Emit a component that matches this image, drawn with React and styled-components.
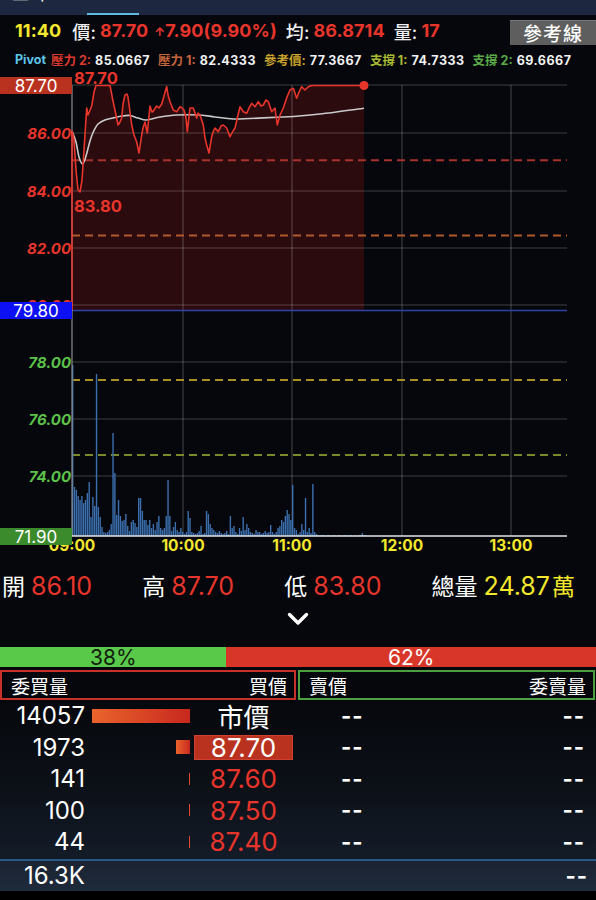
import React from 'react';
import styled, { createGlobalStyle } from 'styled-components';

const RED = '#e8352b';
const YELLOW = '#f4e72c';

const GlobalStyle = createGlobalStyle`
  html, body { margin: 0; padding: 0; background: #05070c; }
  body { font-family: Inter, "Noto Sans CJK TC", sans-serif; }
`;

// volume per minute, 09:00 -> 11:40
const VOL = [
  171, 49, 46, 40, 36, 40, 33, 36, 43, 54,
  19, 39, 30, 162, 29, 19, 9, 4, 3, 4,
  6, 12, 103, 63, 21, 36, 20, 15, 16, 22,
  10, 5, 14, 16, 13, 9, 38, 38, 25, 16,
  16, 11, 16, 8, 12, 6, 14, 20, 8, 6,
  8, 20, 56, 20, 5, 9, 14, 6, 4, 8,
  4, 2, 4, 25, 18, 4, 3, 2, 3, 5,
  10, 2, 3, 25, 22, 12, 8, 6, 4, 3,
  5, 3, 2, 3, 5, 2, 20, 8, 10, 4,
  2, 8, 5, 19, 6, 12, 8, 4, 3, 2,
  6, 4, 4, 2, 3, 5, 3, 4, 11, 4,
  2, 4, 8, 10, 16, 14, 20, 26, 22, 16,
  51, 8, 6, 2, 4, 12, 6, 38, 4, 8,
  3, 52, 4, 2, 1, 1, 1, 1, 0, 1,
  1, 0, 1, 1, 0, 1, 1, 0, 1, 1,
  0, 1, 1, 0, 1, 0, 1, 1, 3, 1, 1,
];

const PRICE = [
  [72, 131], [74, 140], [76, 170], [78, 190], [80, 192], [82, 180], [84, 150], [86.7, 108],
  [88, 115], [91.7, 106], [94, 92], [96, 85.5], [110, 85.5], [113, 101], [116, 115], [118, 125],
  [120, 122], [121.7, 118], [123, 104], [125, 95], [127, 94], [128, 97], [130, 112], [131.7, 125],
  [134, 135], [136.7, 142], [139, 153], [141.7, 135], [143, 128], [145, 122], [147.3, 133],
  [150, 106], [152, 112], [153.3, 111], [156.7, 106], [159, 108], [161.7, 104], [164, 96],
  [166.7, 86.5], [168, 95], [170, 101.7], [173.3, 110], [176.7, 111.7], [180, 106.7], [182, 108],
  [184, 110], [186, 118], [187.3, 131.7], [190, 108], [193.3, 108], [196.7, 118], [198, 113],
  [200, 115], [203.3, 125], [205, 138], [206.7, 145], [209, 153], [211.7, 136.7], [213, 132],
  [215, 128], [218.3, 131.7], [221, 126], [223.3, 125], [226.7, 128], [230, 136.7], [233, 131],
  [235, 128], [238, 115], [240, 106.7], [243.3, 111.7], [246.7, 113.3], [249, 108], [251.7, 103.3],
  [255, 106.7], [258.3, 101.7], [261, 106], [263.3, 105], [266, 100], [268.3, 101.7], [271.7, 111.7],
  [275, 108], [277.3, 125], [280, 115], [283.3, 108], [287, 97], [290, 90], [293.3, 88.3],
  [296.7, 98.3], [299, 92], [301.7, 86.7], [305, 90], [308, 87], [311.7, 85.5], [364, 85.5],
];

const AVG = [
  [72, 131], [76, 142], [79, 157], [82.7, 164], [86, 156], [90, 141], [93.3, 132], [98, 124],
  [105, 120], [113, 118], [122, 116], [130, 115.5], [138, 118], [146.7, 120], [160, 117],
  [176.7, 115], [200, 115], [215, 117], [233.3, 119], [250, 118.5], [276.7, 117.3],
  [293.3, 116.5], [320, 114], [364, 108.3],
];

const smooth = (pts) => {
  let d = `M${pts[0][0]},${pts[0][1]}`;
  for (let i = 0; i < pts.length - 1; i++) {
    const p0 = pts[i - 1] || pts[i];
    const p1 = pts[i];
    const p2 = pts[i + 1];
    const p3 = pts[i + 2] || p2;
    const c1x = p1[0] + (p2[0] - p0[0]) / 6;
    const c1y = p1[1] + (p2[1] - p0[1]) / 6;
    const c2x = p2[0] - (p3[0] - p1[0]) / 6;
    const c2y = p2[1] - (p3[1] - p1[1]) / 6;
    d += ` C${c1x},${c1y} ${c2x},${c2y} ${p2[0]},${p2[1]}`;
  }
  return d;
};

const line = (pts) => 'M' + pts.map((p) => p.join(',')).join(' L');

const GRID_Y = [133, 191, 248, 305, 362, 419, 476];
const GRID_X = [183, 292, 402, 511];
const TIMES = [['09:00', 72], ['10:00', 183], ['11:00', 292], ['12:00', 402], ['13:00', 511]];
const Y_LABELS = [
  ['86.00', 133, RED], ['84.00', 191, RED], ['82.00', 248, RED], ['80.00', 305, RED],
  ['78.00', 362, '#5cc24a'], ['76.00', 419, '#5cc24a'], ['74.00', 476, '#5cc24a'],
];
const DASHES = [[160.2, '#a8322c'], [235.5, '#b05a2c'], [380, '#a89024'], [455, '#7d8a2c']];
const BOXES = [['87.70', 77, '#b9321f'], ['79.80', 302, '#0c10f2'], ['71.90', 528, '#3b8a2c']];

function Chart() {
  const fill = line(PRICE) + ' L364,310.5 L72,310.5 Z';
  return (
    <ChartSvg width="596" height="488" viewBox="0 68 596 488">
      <path d={fill} fill="#2c0b0e" />
      {GRID_Y.map((y) => (
        <line key={y} x1="72" x2="567" y1={y} y2={y} stroke="rgba(255,255,255,0.22)" strokeWidth="1" />
      ))}
      <line x1="72" x2="567" y1="85" y2="85" stroke="rgba(255,255,255,0.22)" />
      {GRID_X.map((x) => (
        <line key={x} x1={x} x2={x} y1="85" y2="536" stroke="rgba(255,255,255,0.25)" strokeWidth="1" />
      ))}
      {DASHES.map(([y, c]) => (
        <line key={y} x1="72" x2="567" y1={y} y2={y} stroke={c} strokeWidth="2" strokeDasharray="8 5" />
      ))}
      <line x1="72" x2="567" y1="310.5" y2="310.5" stroke="#2e44a8" strokeWidth="1.6" />
      {VOL.map((v, m) => (
        <rect key={m} x={72 + m * 1.8333} y={536 - v} width="1.4" height={v} fill="#3b6fae" />
      ))}
      <line x1="72" x2="72" y1="85" y2="536" stroke="#8c8c8c" strokeWidth="1.2" />
      <line x1="72" x2="72" y1="131" y2="310" stroke={RED} strokeWidth="1.5" />
      <line x1="72" x2="567" y1="536" y2="536" stroke="#e6e6e6" strokeWidth="1.5" />
      <path d={smooth(AVG)} fill="none" stroke="#c9c9c9" strokeWidth="1.6" />
      <path d={line(PRICE)} fill="none" stroke={RED} strokeWidth="1.6" strokeLinejoin="round" />
      <circle cx="364" cy="85.5" r="4.5" fill={RED} />

      <AxisText x="74" y="84" fill={RED} $size={16.5}>87.70</AxisText>
      <AxisText x="74" y="212" fill={RED} $size={16.5}>83.80</AxisText>
      {Y_LABELS.map(([t, y, c]) => (
        <AxisText key={t} x="71" y={y + 5.5} fill={c} textAnchor="end" $italic>{t}</AxisText>
      ))}
      {TIMES.map(([t, x]) => (
        <AxisText key={t} x={x} y="551" fill={YELLOW} textAnchor="middle">{t}</AxisText>
      ))}
      {BOXES.map(([t, y, c]) => (
        <g key={t}>
          <rect x="0" y={y} width="72" height="17" fill={c} />
          <BoxText x="36" y={y + 14.5} textAnchor="middle">{t}</BoxText>
        </g>
      ))}
    </ChartSvg>
  );
}

const STATS = [
  { label: '開', value: '86.10' },
  { label: '高', value: '87.70' },
  { label: '低', value: '83.80' },
  { label: '總量', value: '24.87', unit: '萬', color: YELLOW },
];

const BIDS = [
  { vol: 14057, price: '市價', market: true },
  { vol: 1973, price: '87.70', hi: true },
  { vol: 141, price: '87.60' },
  { vol: 100, price: '87.50' },
  { vol: 44, price: '87.40' },
];

const PIVOTS = [
  ['壓力 2:', '85.0667', '#dc3a2e'],
  ['壓力 1:', '82.4333', '#c8663c'],
  ['參考價:', '77.3667', '#c9a22c'],
  ['支撐 1:', '74.7333', '#a9b932'],
  ['支撐 2:', '69.6667', '#5aab48'],
];

export default function App() {
  return (
    <Page>
      <GlobalStyle />
      <TabBar>
        <Tab $w={87}><TabLabel>三 丨</TabLabel></Tab>
        <Tab $w={52} $active />
      </TabBar>

      <QuoteRow>
        <Time>11:40</Time>
        <Label>價:</Label>
        <Num $c={RED}>87.70</Num>
        <Arrow>↑</Arrow>
        <Num $c={RED}>7.90(9.90%)</Num>
        <Label>均:</Label>
        <Num $c={RED}>86.8714</Num>
        <Label>量:</Label>
        <Num $c={RED}>17</Num>
        <RefButton>參考線</RefButton>
      </QuoteRow>

      <PivotRow>
        <PivotTag>Pivot</PivotTag>
        {PIVOTS.map(([l, v, c]) => (
          <PivotItem key={l}>
            <PivotLabel $c={c}>{l}</PivotLabel>
            <PivotValue>{v}</PivotValue>
          </PivotItem>
        ))}
      </PivotRow>

      <Chart />

      <StatsRow>
        {STATS.map((s) => (
          <Stat key={s.label}>
            <StatLabel>{s.label}</StatLabel>
            <StatValue $c={s.color || RED}>{s.value}</StatValue>
            {s.unit && <StatUnit>{s.unit}</StatUnit>}
          </Stat>
        ))}
      </StatsRow>

      <ChevronRow>
        <svg width="22" height="14" viewBox="0 0 22 14">
          <polyline points="2.5,2.5 11,11 19.5,2.5" fill="none" stroke="#fff" strokeWidth="3.4" strokeLinecap="round" strokeLinejoin="round" />
        </svg>
      </ChevronRow>

      <RatioBar>
        <RatioPart $w={38} $bg="#59c94a" $c="#14200f">38%</RatioPart>
        <RatioPart $w={62} $bg="#d9362a" $c="#fff">62%</RatioPart>
      </RatioBar>

      <HeadRow>
        <HeadBox $border="#c9302a" $w={296}>
          <span>委買量</span>
          <span>買價</span>
        </HeadBox>
        <HeadBox $border="#4c9f3e" $w={297}>
          <span>賣價</span>
          <span>委賣量</span>
        </HeadBox>
      </HeadRow>

      <Book>
        {BIDS.map((b) => (
          <BookRow key={b.price}>
            <Vol>{b.vol}</Vol>
            <BarCell>
              <Bar $thin={b.vol < 1000} style={{ width: Math.max(1.5, (98 * b.vol) / 14057) }} />
            </BarCell>
            <Price $market={b.market} $hi={b.hi}>{b.price}</Price>
            <AskSide>
              <Dash>--</Dash>
              <Dash $right>--</Dash>
            </AskSide>
          </BookRow>
        ))}
        <TotalRow>
          <Vol>16.3K</Vol>
          <Dash $right>--</Dash>
        </TotalRow>
      </Book>
      <Footer />
    </Page>
  );
}

const Page = styled.div`
  width: 596px;
  height: 900px;
  overflow: hidden;
  background: #05070c;
  color: #fff;
  display: flex;
  flex-direction: column;
`;

const TabBar = styled.div`
  height: 15px;
  flex: none;
  background: #1d2840;
  display: flex;
  overflow: hidden;
`;

const Tab = styled.div`
  width: ${(p) => p.$w}px;
  height: 15px;
  box-sizing: border-box;
  border-bottom: 2px solid ${(p) => (p.$active ? '#5fb9e3' : 'transparent')};
  overflow: hidden;
`;

const TabLabel = styled.div`
  margin: -15px 0 0 12px;
  font-size: 17px;
  line-height: 18px;
  color: #fff;
  white-space: nowrap;
`;

const QuoteRow = styled.div`
  height: 31px;
  flex: none;
  display: flex;
  align-items: center;
  padding-left: 15px;
  font-size: 18px;
  font-weight: 700;
  letter-spacing: 0.1px;
  white-space: nowrap;
`;

const Time = styled.span`
  color: ${YELLOW};
  margin-right: 11px;
`;

const Label = styled.span`
  color: #eee;
  font-weight: 500;
  margin-right: 4px;
`;

const Num = styled.span`
  color: ${(p) => p.$c};
  margin-right: 9px;
`;

const Arrow = styled.span`
  color: ${RED};
  font-size: 12px;
  margin: 2px 0 0 -3px;
`;

const RefButton = styled.div`
  margin-left: auto;
  margin-top: 3px;
  width: 86px;
  height: 25px;
  background: #5e5e5e;
  border-top: 1px solid #777;
  box-sizing: border-box;
  display: flex;
  align-items: center;
  justify-content: center;
  font-size: 19px;
  font-weight: 500;
  letter-spacing: 1px;
  color: #fff;
`;

const PivotRow = styled.div`
  height: 22px;
  flex: none;
  display: flex;
  align-items: center;
  padding: 4px 0 0 15px;
  box-sizing: border-box;
  font-size: 12.5px;
  font-weight: 700;
  white-space: nowrap;
`;

const PivotTag = styled.span`
  color: #5ec6ea;
  margin-right: 5px;
`;

const PivotItem = styled.span`
  margin-right: 8px;
`;

const PivotLabel = styled.span`
  color: ${(p) => p.$c};
  margin-right: 4px;
`;

const PivotValue = styled.span`
  color: #f2f2f2;
  letter-spacing: 0.5px;
`;

const ChartSvg = styled.svg`
  display: block;
  flex: none;
`;

const AxisText = styled.text`
  font-family: Inter, "Liberation Sans", sans-serif;
  font-size: ${(p) => p.$size || (p.$italic ? 15 : 15.5)}px;
  font-weight: 700;
  font-style: ${(p) => (p.$italic ? 'italic' : 'normal')};
`;

const BoxText = styled.text`
  font-family: Inter, "Liberation Sans", sans-serif;
  font-size: 17px;
  fill: #fff;
`;

const StatsRow = styled.div`
  height: 50px;
  flex: none;
  box-sizing: border-box;
  padding: 8px 21px 0 2px;
  display: flex;
  align-items: center;
  justify-content: space-between;
  font-size: 25px;
`;

const Stat = styled.div`
  display: flex;
  align-items: baseline;
`;

const StatLabel = styled.span`
  color: #fff;
  font-size: 23px;
  margin-right: 6px;
`;

const StatValue = styled.span`
  color: ${(p) => p.$c};
`;

const StatUnit = styled.span`
  color: ${YELLOW};
  font-size: 23px;
  margin-left: 2px;
`;

const ChevronRow = styled.div`
  height: 41px;
  flex: none;
  display: flex;
  justify-content: center;
  align-items: flex-start;
  padding-top: 6px;
  box-sizing: border-box;
`;

const RatioBar = styled.div`
  height: 20px;
  flex: none;
  display: flex;
  margin-bottom: 3px;
`;

const RatioPart = styled.div`
  width: ${(p) => p.$w}%;
  background: ${(p) => p.$bg};
  color: ${(p) => p.$c};
  display: flex;
  align-items: center;
  justify-content: center;
  font-size: 21px;
  line-height: 1;
`;

const HeadRow = styled.div`
  height: 30px;
  flex: none;
  display: flex;
  gap: 2px;
`;

const HeadBox = styled.div`
  width: ${(p) => p.$w}px;
  box-sizing: border-box;
  border: 2px solid ${(p) => p.$border};
  display: flex;
  align-items: center;
  justify-content: space-between;
  padding: 0 7px 0 9px;
  font-size: 19px;
  color: #fff;
`;

const Book = styled.div`
  flex: none;
  display: flex;
  flex-direction: column;
  background: linear-gradient(180deg, #06080d 0%, #0c1017 45%, #172130 100%);
`;

const BookRow = styled.div`
  height: 31.5px;
  display: grid;
  grid-template-columns: 85px 105px 103px 1fr;
  align-items: center;
  font-size: 24px;
`;

const Vol = styled.div`
  text-align: right;
  color: #fff;
`;

const BarCell = styled.div`
  display: flex;
  justify-content: flex-end;
`;

const Bar = styled.div`
  height: ${(p) => (p.$thin ? 12 : 14)}px;
  background: ${(p) => (p.$thin ? '#e04a2a' : 'linear-gradient(90deg, #ea642c, #c8281e)')};
`;

const Price = styled.div`
  margin-left: 4px;
  width: 99px;
  height: 25px;
  box-sizing: border-box;
  display: flex;
  align-items: center;
  justify-content: center;
  font-size: 26px;
  color: ${(p) => (p.$market || p.$hi ? '#fff' : RED)};
  background: ${(p) => (p.$hi ? '#b8321f' : 'transparent')};
  border: 1px solid ${(p) => (p.$hi ? '#cf4030' : 'transparent')};
`;

const AskSide = styled.div`
  display: flex;
  align-items: center;
  padding: 0 11px 0 48px;
`;

const Dash = styled.span`
  font-weight: 700;
  font-size: 22px;
  letter-spacing: 1px;
  color: #fff;
  margin-left: ${(p) => (p.$right ? 'auto' : '0')};
`;

const TotalRow = styled.div`
  height: 30px;
  margin-top: 1px;
  border-top: 2px solid #2a5a84;
  background: linear-gradient(180deg, #1a2433, #1f2a3a);
  display: grid;
  grid-template-columns: 85px 1fr;
  align-items: center;
  padding-right: 8px;
  font-size: 24px;
`;

const Footer = styled.div`
  flex: 1;
  background: #000;
`;
